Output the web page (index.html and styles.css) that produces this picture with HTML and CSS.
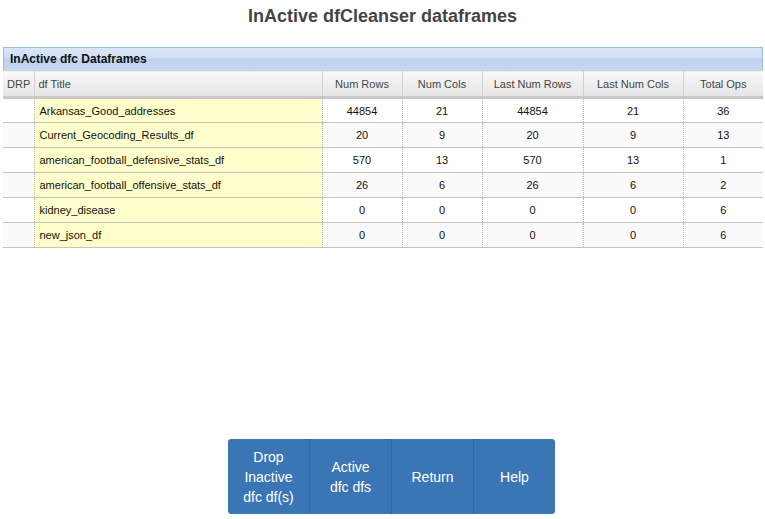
FILE: index.html
```html
<!DOCTYPE html>
<html>
<head>
<meta charset="utf-8">
<link rel="stylesheet" href="styles.css">
</head>
<body>
<h1 class="title">InActive dfCleanser dataframes</h1>
<div class="panel">
  <div class="panel-head">InActive dfc Dataframes</div>
  <table class="grid">
    <colgroup>
      <col class="c-drp">
      <col class="c-title">
      <col class="c-n80">
      <col class="c-n80">
      <col class="c-n101">
      <col class="c-n100">
      <col>
    </colgroup>
    <thead>
      <tr>
        <th class="left">DRP</th>
        <th class="left">df Title</th>
        <th>Num Rows</th>
        <th>Num Cols</th>
        <th>Last Num Rows</th>
        <th>Last Num Cols</th>
        <th>Total Ops</th>
      </tr>
    </thead>
    <tbody>
      <tr><td></td><td class="name">Arkansas_Good_addresses</td><td>44854</td><td>21</td><td>44854</td><td>21</td><td>36</td></tr>
      <tr><td></td><td class="name">Current_Geocoding_Results_df</td><td>20</td><td>9</td><td>20</td><td>9</td><td>13</td></tr>
      <tr><td></td><td class="name">american_football_defensive_stats_df</td><td>570</td><td>13</td><td>570</td><td>13</td><td>1</td></tr>
      <tr><td></td><td class="name">american_football_offensive_stats_df</td><td>26</td><td>6</td><td>26</td><td>6</td><td>2</td></tr>
      <tr><td></td><td class="name">kidney_disease</td><td>0</td><td>0</td><td>0</td><td>0</td><td>6</td></tr>
      <tr><td></td><td class="name">new_json_df</td><td>0</td><td>0</td><td>0</td><td>0</td><td>6</td></tr>
    </tbody>
  </table>
</div>
<div class="buttons">
  <button class="btn">Drop<br>Inactive<br>dfc df(s)</button>
  <button class="btn">Active<br>dfc dfs</button>
  <button class="btn">Return</button>
  <button class="btn">Help</button>
</div>
</body>
</html>
```
FILE: styles.css
```css
html, body {
  margin: 0;
  padding: 0;
  background: #fff;
  font-family: "Liberation Sans", Arial, sans-serif;
}
.title {
  margin: 6px 0 0 0;
  height: 41px;
  text-align: center;
  font-size: 18px;
  font-weight: bold;
  color: #444;
  line-height: 20px;
}
.panel {
  margin: 0 2px 0 3px;
  border-top: 1px solid #99bbe8;
}
.panel-head {
  height: 22px;
  line-height: 22px;
  padding-left: 6px;
  font-size: 12px;
  font-weight: bold;
  color: #111;
  background: linear-gradient(#dae6f6 0%, #cfdff5 45%, #bcd1ef 50%, #c6d7f1 100%);
  border-left: 1px solid #99bbe8;
  border-right: 1px solid #99bbe8;
}
.grid {
  width: 100%;
  border-collapse: collapse;
  table-layout: fixed;
  font-size: 11px;
}
.c-drp { width: 31px; }
.c-title { width: 288px; }
.c-n80 { width: 80px; }
.c-n101 { width: 101px; }
.c-n100 { width: 100px; }
.grid th {
  box-sizing: border-box;
  height: 27px;
  padding: 0;
  font-weight: normal;
  color: #444;
  background: linear-gradient(#f9f9f9, #e5e5e5);
  border-left: 1px solid #d0d0d0;
  border-top: 1px solid #d0d0d0;
  border-bottom: 3px solid #c8c8c8;
  text-align: center;
}
.grid th:first-child { border-left: none; }
.grid th.left { text-align: left; padding-left: 4px; }
.grid td {
  box-sizing: border-box;
  height: 25px;
  padding: 0;
  color: #111;
  text-align: center;
  border-left: 1px dotted #b8b8b8;
  border-bottom: 1px solid #c4c4c4;
}
.grid td:first-child { border-left: none; }
.grid tbody tr:nth-child(even) td { background: #fafafa; }
.grid td.name,
.grid tbody tr:nth-child(even) td.name {
  background: #ffffcc;
  text-align: left;
  padding-left: 5px;
}
.buttons {
  margin: 191px 0 0 228px;
  display: flex;
  width: 327px;
  height: 75px;
  background: #3a76b5;
  border-radius: 4px;
  overflow: hidden;
}
.btn {
  flex: 1 1 0;
  margin: 0;
  padding: 0;
  border: none;
  border-left: 1px solid #2f68a3;
  background: #3a76b5;
  color: #fff;
  font-family: "Liberation Sans", Arial, sans-serif;
  font-size: 14px;
  line-height: 20px;
}
.btn:first-child { border-left: none; }
```
